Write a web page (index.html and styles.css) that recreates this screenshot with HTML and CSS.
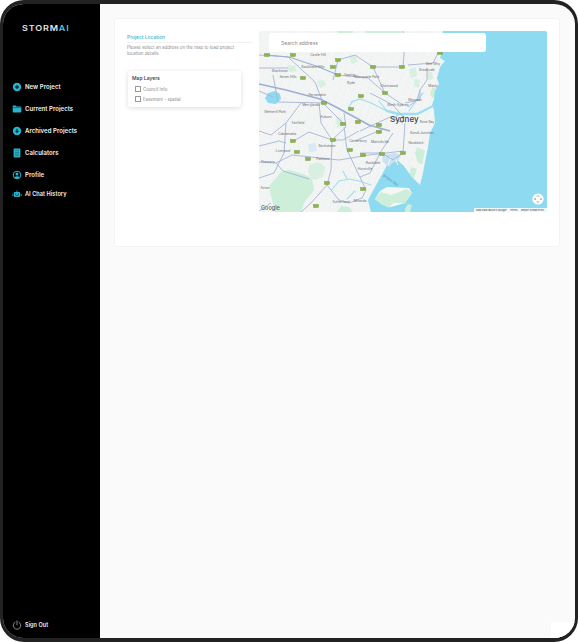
FILE: index.html
```html
<!DOCTYPE html>
<html lang="en">
<head>
  <meta charset="UTF-8" />
  <title>StormAI - New Project</title>
  <meta name="viewport" content="width=device-width, initial-scale=1" />
  <link rel="stylesheet" href="styles.css">
</head>
<body>
  <div class="frame">
    <aside class="sidebar">
      <div class="logo"><span class="logo-text">STORM<span class="logo-ai">AI</span></span></div>

      <nav class="nav">
        <a class="nav-item">
          <svg class="nav-icon" viewBox="0 0 10 10"><circle cx="5" cy="5" r="4.2" fill="#27b4cc"/><path d="M5 3v4M3 5h4" stroke="#000" stroke-width="1"/></svg>
          New Project
        </a>
        <a class="nav-item">
          <svg class="nav-icon" viewBox="0 0 10 10"><path d="M.7 2.2q0-.7.7-.7h2.2l.9 1h4q.8 0 .8.8v4.4q0 .8-.8.8H1.5q-.8 0-.8-.8z" fill="#27b4cc"/><path d="M.7 3.6h8.6" stroke="#000" stroke-width=".4"/></svg>
          Current Projects
        </a>
        <a class="nav-item">
          <svg class="nav-icon" viewBox="0 0 10 10"><circle cx="5" cy="5" r="4.2" fill="#27b4cc"/><path d="M5 2.8v3.4M3.5 4.9 5 6.5l1.5-1.6" stroke="#000" stroke-width=".9" fill="none"/></svg>
          Archived Projects
        </a>
        <a class="nav-item">
          <svg class="nav-icon" viewBox="0 0 10 10"><rect x="1.6" y=".6" width="6.8" height="8.8" rx=".8" fill="#27b4cc"/><path d="M3 2.4h4M3 4.4h4M3 6h4M3 7.6h4" stroke="#0b5563" stroke-width=".5"/></svg>
          Calculators
        </a>
        <a class="nav-item">
          <svg class="nav-icon" viewBox="0 0 10 10"><circle cx="5" cy="5" r="3.8" fill="none" stroke="#27b4cc" stroke-width="1"/><circle cx="5" cy="4" r="1.5" fill="#27b4cc"/><path d="M2.2 7.6q2.8-2.6 5.6 0-2.8 2.4-5.6 0z" fill="#27b4cc"/></svg>
          Profile
        </a>
        <a class="nav-item nav-item-last">
          <svg class="nav-icon" viewBox="0 0 10 10"><rect x="1.8" y="3" width="6.4" height="5" rx="1.2" fill="#27b4cc"/><path d="M5 1.4V3M.8 5v2M9.2 5v2" stroke="#27b4cc" stroke-width=".8"/><circle cx="3.7" cy="5" r=".6" fill="#000"/><circle cx="6.3" cy="5" r=".6" fill="#000"/><path d="M3.6 6.7h2.8" stroke="#000" stroke-width=".5"/></svg>
          AI Chat History
        </a>
      </nav>

      <a class="sign-out">
        <svg class="nav-icon" viewBox="0 0 10 10"><path d="M3 2.2a3.8 3.8 0 1 0 4 0M5 .8v4" fill="none" stroke="#ddd" stroke-width=".6" stroke-linecap="round"/></svg>
        Sign Out
      </a>
    </aside>

    <main class="content">
      <section class="card">
        <div class="side-col">
          <h2 class="section-title">Project Location</h2>
          <p class="section-desc">Please select an address on the map to load project location details.</p>

          <div class="layers">
            <h3 class="layers-title">Map Layers</h3>
            <label class="layer-row"><span class="check"></span>Council Info</label>
            <label class="layer-row"><span class="check"></span>Easement - spatial</label>
          </div>
        </div>

        <div class="map">
          <svg class="map-canvas" viewBox="0 0 288 181">
            <defs>
              <pattern id="streets" width="7" height="6" patternUnits="userSpaceOnUse" patternTransform="rotate(18)">
                <path d="M0 2h7M3 0v6M0 5h4M6 2v4" fill="none" stroke="#e2e5e8" stroke-width=".3"/>
              </pattern>
            </defs>
            <rect width="288" height="181" fill="#f5f7f6"/>
            <rect width="288" height="181" fill="url(#streets)"/>

            <!-- parks -->
            <g fill="#cdeed9">
              <path d="M22 141 30 139 44 143 53 147 55 159 45 172 42 181H16L12 165 10 155Z"/>
              <path d="M78 0h16l-1 3H80zM106 0h37l-1 3h-35z"/>
              <path d="M78 181l4-6 8 1 4 5z"/>
              <path d="M50 134l9-3 8 5-3 10-9 3-6-7z" opacity=".7"/>
              <path d="M77 86l6 1 1 8-6 2zM90 26l6-2 3 6-6 3zM30 34l6 1 2 5-7 1-3-4zM58 50l7-1 2 5-6 3zM150 38l7-2 1 9-6 3zM155 48l6 1-1 8-5-2zM168 40l5 1 1 7-5 1z" opacity=".7"/>
              <path d="M174 56l6 3-1 7-6 1-2-5zM158 116l8 4-3 14-5-4-2-8zM152 136l6 2-3 9-5-3z"/>
            </g>

            <!-- ocean, harbour, bay -->
            <path fill="#8edaf0" d="M184 0 182 10 184 18 181 27 186 30 181 36 178 47 180 53 176 60 175 68 173 74 175 79 176 92 171 102 169 116 166 131 164 142 161 154 152 145 145 135 136 127 130 130 126 138 116 156 109 169 112 181H288V0Z"/>
            <g fill="none" stroke="#9cdff2" stroke-linecap="round">
              <path stroke-width="2.4" d="M174 75 158 83 140 83 128 80"/>
              <path stroke-width="1.2" d="M128 80 112 72 101 68 92 71M150 80 157 70 164 62M128 80 120 70M140 83 134 88"/>
              <path stroke-width="1.1" d="M112 154 100 150 90 148 80 150 72 160M88 148 84 140M96 160 88 168M94 70 90 76"/>
            </g>
            <path fill="#f5f7f6" d="M116 168 121 160 128 156 150 157 153 162 146 172 132 176 122 173Z"/>
            <path fill="#cdeed9" d="M116 168 122 161 132 164 148 158 153 162 146 172 134 172 130 177 122 173ZM146 178l3-5 4 1-2 7h-5z"/>
            <path fill="#c9e1f3" d="M123 124l13-2 6 2-3 6-6 2-3 4-6-5z"/>
            <path d="M132 126l-3 8M136 127l3 7" stroke="#f5f7f6" stroke-width="1"/>
            <path fill="#dbe8f5" d="M49 113l8-1 1 8-8 1z"/>
            <path fill="#8edaf0" d="M9 62l7-2 5 3 1 5-5 5-8-1-3-5z"/>

            <!-- roads -->
            <g fill="none" stroke="#a6b4d6" stroke-width=".9">
              <path d="M0 24 29 26 56 51 64 72 84 92"/>
              <path d="M79 29 74 49M79 29 96 24 114 36 126 62 144 74"/>
              <path d="M114 36H144M79 44 109 47 126 62M14 44 19 71 66 72M0 37H29"/>
              <path d="M42 72 27 92 25 122 15 142 0 147"/>
              <path d="M0 131 17 132 33 124 80 129 110 124 144 120"/>
              <path d="M33 111 50 101 73 109 87 96 85 82"/>
              <path d="M73 109 72 139 68 154 52 172 42 181"/>
              <path d="M68 154 80 169 90 172 103 167"/>
              <path d="M85 96 88 119 107 159 103 167"/>
              <path d="M146 92 144 122M101 100 131 86 144 92"/>
              <path d="M134 102 121 122 101 122M144 122 134 129 123 122M101 146 111 142 121 122"/>
              <path d="M111 62 134 74 144 86M146 72 161 69 161 59"/>
              <path d="M149 34 174 32 179 22M168 37V49L161 59 158 69 149 76"/>
              <path d="M144 0 146 10 144 36M0 60 14 66M0 100 12 104 27 92"/>
              <path d="M0 115 20 110 27 112M60 72 62 92 73 109M100 100 84 109 73 109"/>
              <path d="M0 180 12 172M17 132 24 140 50 148M96 110 124 98"/>
            </g>
            <path fill="none" stroke="#9dafd3" stroke-width="1.7" d="M0 53 27 59 61 68 77 76 110 94 131 100"/>
            <path fill="none" stroke="#9dafd3" stroke-width="1.2" d="M8 24 30 26 60 36 79 44"/>

            <!-- motorway shields -->
            <g class="shields">
              <rect x="5.5" y="22.5" width="5" height="3"/><rect x="31.5" y="22.5" width="5" height="3"/>
              <rect x="76.5" y="27.5" width="5" height="3"/><rect x="71.5" y="34.5" width="5" height="3"/>
              <rect x="76.5" y="42.5" width="5" height="3"/><rect x="41.5" y="45.5" width="5" height="3"/>
              <rect x="111.5" y="34.5" width="5" height="3"/><rect x="140.5" y="34.5" width="5" height="3"/>
              <rect x="123.5" y="60.5" width="5" height="3"/><rect x="99.5" y="63.5" width="5" height="3"/>
              <rect x="62.5" y="70.5" width="5" height="3"/><rect x="89.5" y="76.5" width="5" height="3"/>
              <rect x="81.5" y="91.5" width="5" height="3"/><rect x="96.5" y="89.5" width="5" height="3"/>
              <rect x="117.5" y="92.5" width="5" height="3"/><rect x="117.5" y="99.5" width="5" height="3"/>
              <rect x="31.5" y="108.5" width="5" height="3"/><rect x="71.5" y="107.5" width="5" height="3"/>
              <rect x="35.5" y="119.5" width="5" height="3"/><rect x="46.5" y="126.5" width="5" height="3"/>
              <rect x="88.5" y="117.5" width="5" height="3"/><rect x="101.5" y="122.5" width="5" height="3"/>
              <rect x="120.5" y="121.5" width="5" height="3"/><rect x="141.5" y="120.5" width="5" height="3"/>
              <rect x="65.5" y="150.5" width="5" height="3"/><rect x="101.5" y="156.5" width="5" height="3"/>
              <rect x="54.5" y="173.5" width="5" height="3"/><rect x="178.5" y="20.5" width="5" height="3"/>
            </g>

            <!-- place names -->
            <g class="map-label">
              <text x="59" y="25">Castle Hill</text>
              <text x="54" y="37">Baulkham Hills</text>
              <text x="21" y="41">Blacktown</text>
              <text x="29" y="47">Seven Hills</text>
              <text x="91" y="45">Epping</text>
              <text x="108" y="47">Macquarie Park</text>
              <text x="92" y="53">Ryde</text>
              <text x="130" y="56">Chatswood</text>
              <text x="58" y="65">Parramatta</text>
              <text x="52" y="75">Merrylands</text>
              <text x="16" y="82">Wetherill Park</text>
              <text x="67" y="87">Auburn</text>
              <text x="39" y="93">Fairfield</text>
              <text x="139" y="75">North Sydney</text>
              <text x="174" y="34">Dee Why</text>
              <text x="168" y="40">Brookvale</text>
              <text x="174" y="56">Manly</text>
              <text x="156" y="70">Mosman</text>
              <text x="168" y="92">Rose Bay</text>
              <text x="163" y="103">Bondi Junction</text>
              <text x="157" y="113">Randwick</text>
              <text x="28" y="104">Cabramatta</text>
              <text x="68" y="116">Bankstown</text>
              <text x="24" y="121">Liverpool</text>
              <text x="99" y="111">Canterbury</text>
              <text x="121" y="112">Marrickville</text>
              <text x="64" y="129">Padstow</text>
              <text x="114" y="133">Rockdale</text>
              <text x="106" y="139">Hurstville</text>
              <text x="82" y="172">Sutherland</text>
              <text x="101" y="171">Miranda</text>
              <text x="9" y="132">Prestons</text>
              <text x="6" y="158">Acton</text>
              <text class="map-label-bay" transform="translate(131 150) rotate(35)">Botany Bay</text>
            </g>
            <text class="map-city" x="131" y="91">Sydney</text>
            <text class="map-google" x="2" y="179">Google</text>

            <!-- attribution -->
            <rect x="215" y="177" width="73" height="4" fill="#fff" opacity=".85"/>
            <text class="map-attr" x="217" y="180">Map data ©2025 Google</text>
            <text class="map-attr" x="251" y="180">Terms</text>
            <text class="map-attr" x="262" y="180">Report a map error</text>

            <!-- fullscreen button -->
            <circle cx="279" cy="168" r="5.6" fill="#fff"/>
            <g fill="none" stroke="#555" stroke-width=".7">
              <path d="M276.6 167 275.6 168 276.6 169M281.4 167 282.4 168 281.4 169M278 165.6 279 164.6 280 165.6M278 170.4 279 171.4 280 170.4"/>
            </g>
          </svg>
          <input class="map-search" type="text" placeholder="Search address">
        </div>
      </section>
    </main>

    <div class="corner-patch"></div>
  </div>
</body>
</html>
```

FILE: styles.css
```css
html, body {
  margin: 0; padding: 0; height: 100%;
  background: #fff; font-family: 'Inter', 'Liberation Sans', sans-serif;
}

.frame {
  position: relative;
  box-sizing: border-box;
  width: 578px; height: 642px;
  display: flex; overflow: hidden;
  border: solid #222;
  border-width: 4px 3px 4px 3px;
  border-radius: 24px;
  background: #fafafa;
}

.corner-patch {
  position: absolute; right: 0; bottom: 0;
  width: 24px; height: 16px;
  background: #fff;
}

/* Sidebar */
.sidebar {
  width: 97px; flex: none;
  display: flex; flex-direction: column;
  background: #000;
  padding: 0 0 8px 9px;
  box-sizing: border-box;
}

.logo {
  margin: 20px 0 0 10px;
  font-size: 7.5px; line-height: 9px; font-weight: 600;
  letter-spacing: 0.7px; color: #e4e4e4;
}
.logo-text { display: inline-block; transform: scaleX(1.2); transform-origin: left center; }
.logo-ai { color: #5fc3d6; }

.nav {
  display: flex; flex-direction: column;
  margin-top: 43px;
}

.nav-item, .sign-out {
  display: flex; align-items: center; gap: 3px;
  font-size: 6px; font-weight: 600; line-height: 10px;
  color: #f2f2f2; letter-spacing: 0.05px;
}
.nav-item { height: 22px; }
.nav-item-last { height: 15px; font-size: 5.6px; }

.sign-out { margin-top: auto; font-size: 5.5px; }

.nav-icon { width: 10px; height: 10px; flex: none; }

/* Main */
.content {
  flex: 1; min-width: 0;
  padding: 14px 15px 0 14px;
  box-sizing: border-box;
}

.card {
  box-sizing: border-box;
  height: 229px;
  display: flex; gap: 18px;
  padding: 12px 13px 0 12px;
  background: #fff;
  border: 1px solid #f3f3f3;
  border-radius: 3px;
}

.side-col { width: 114px; flex: none; }

.section-title {
  margin: 2px 0 0;
  font-size: 4.9px; line-height: 9px; font-weight: 500;
  color: #3ab9d1;
  border-bottom: 1px solid #f2f2f2;
  width: 125px;
}

.section-desc {
  margin: 2px 0 0;
  font-size: 4.4px; line-height: 6px; color: #8a8a8a;
  width: 110px;
}

.layers {
  margin-top: 14px; margin-left: 1px;
  width: 113px; height: 36px; box-sizing: border-box;
  padding: 3px 4px;
  background: #fff; border-radius: 3px;
  box-shadow: 0 1px 5px rgba(0,0,0,0.14);
}

.layers-title {
  margin: 0 0 2px;
  font-size: 5px; line-height: 8px; font-weight: 500; color: #333;
}

.layer-row {
  display: flex; align-items: center; gap: 2px;
  height: 10px; padding-left: 3px;
  font-size: 4.3px; color: #888;
}

.check {
  box-sizing: border-box;
  width: 6px; height: 6px; flex: none;
  border: 0.7px solid #999;
  border-radius: 0.5px;
}

/* Map */
.map {
  position: relative;
  width: 288px; height: 181px; flex: none;
  border-radius: 2px; overflow: hidden;
}

.map-canvas { display: block; width: 288px; height: 181px; }

.map-search {
  position: absolute; top: 2px; left: 10px;
  box-sizing: border-box;
  width: 217px; height: 19px; padding: 0 12px;
  border: 0; outline: 0; border-radius: 3px;
  background: #fff;
  font-family: inherit; font-size: 5px; color: #777;
}
.map-search::placeholder { color: #888; }

.shields rect { fill: #8eb34e; stroke: #6c9636; stroke-width: 0.4; }

.map-label text { font-size: 3.3px; fill: #666c74; text-anchor: middle; }
.map-label .map-label-bay { fill: #4a8fa8; }
.map-city { font-size: 8px; fill: #3c4350; font-weight: 500; }
.map-google { font-size: 5.5px; fill: #5f6368; font-weight: 500; }
.map-attr { font-size: 2.6px; fill: #444; }
```
